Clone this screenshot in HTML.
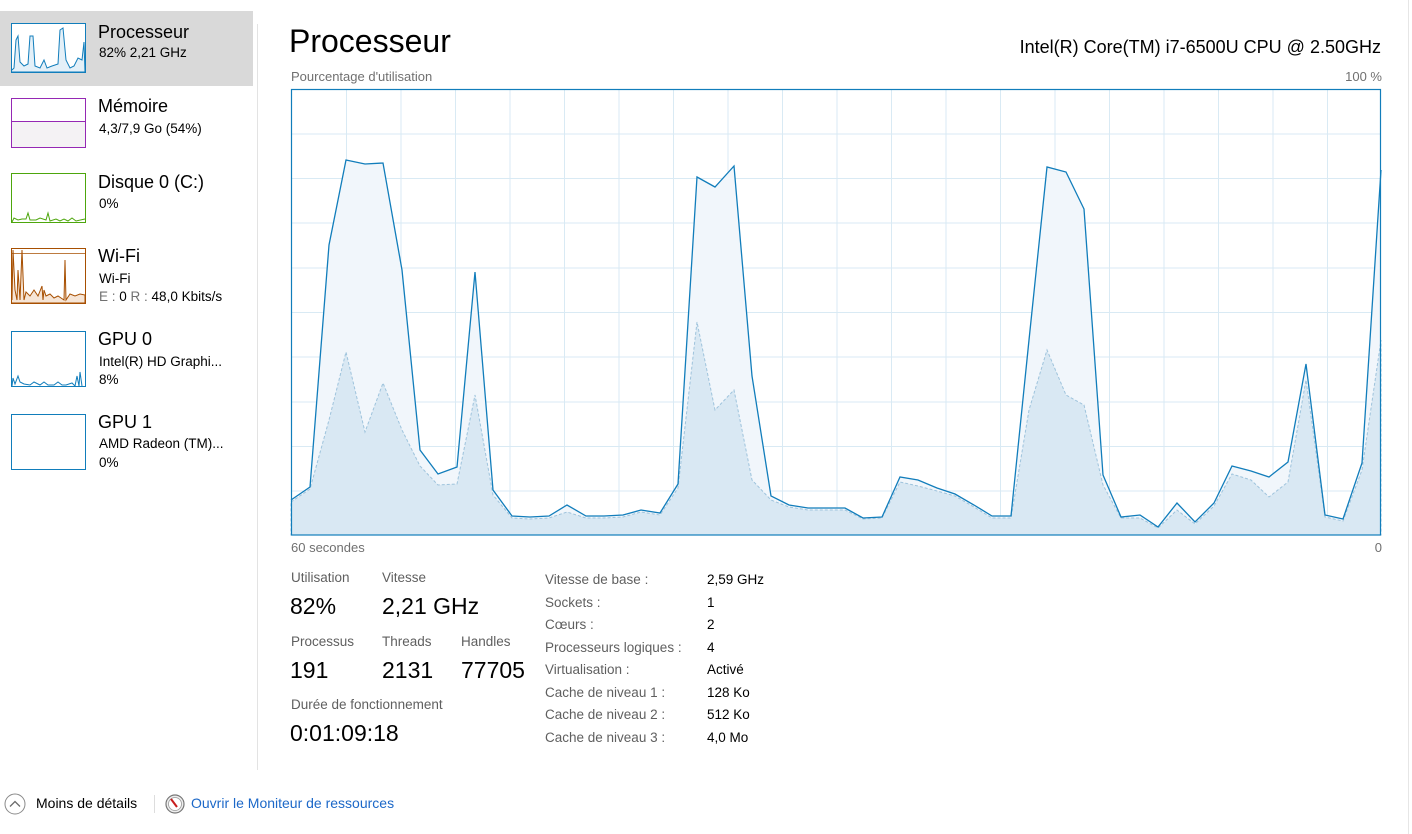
<!DOCTYPE html>
<html><head><meta charset="utf-8"><style>
*{margin:0;padding:0;box-sizing:border-box}
body{width:1412px;height:834px;background:#fff;font-family:"Liberation Sans",sans-serif;color:#000;position:relative;overflow:hidden}
.a{position:absolute;white-space:nowrap}
.g{color:#707070}
.t1{font-size:18px}
.t2{font-size:13.5px}
.lab{font-size:13.5px;color:#5f5f5f}
.big{font-size:23px}
</style></head><body>
<div class="a" style="left:0;top:11px;width:253px;height:75px;background:#d9d9d9"></div>
<div class="a" style="left:257px;top:24px;width:1px;height:746px;background:#e3e3e3"></div>
<div class="a" style="left:1408px;top:0;width:1px;height:834px;background:#e6e6e6"></div>

<svg class="a" style="left:0;top:0" width="100" height="480">
<rect x="11.5" y="23.5" width="74" height="49" fill="#fff" stroke="#117dbb"/>
<polyline points="12,70 14,68 16,40 18,36 20,62 24,66 28,64 30,36 33,36 35,66 40,68 44,60 47,68 52,66 58,64 60,30 63,28 66,60 70,68 74,66 78,58 82,60 84,42 85,72 12,72" fill="#e4f0f8" stroke="#117dbb" stroke-width="1"/>
<rect x="11.5" y="98.5" width="74" height="49" fill="#fff" stroke="#9528b4"/>
<rect x="12" y="121" width="73" height="26" fill="#f4f2f4"/>
<line x1="12" y1="121.5" x2="85" y2="121.5" stroke="#9528b4"/>
<rect x="11.5" y="173.5" width="74" height="49" fill="#fff" stroke="#4da60c"/>
<polyline points="12,222 14,218 18,220 22,219 26,219 28,213 30,220 36,220 40,218 46,220 48,213 50,221 56,219 60,221 64,219 68,221 72,218 76,221 85,219" fill="none" stroke="#4da60c"/>
<rect x="11.5" y="248.5" width="74" height="55" fill="#fff" stroke="#a74f01"/>
<line x1="12" y1="253.5" x2="85" y2="253.5" stroke="#a74f01" stroke-width=".8"/>
<polyline points="12,300 13,250 15,290 17,300 18,270 20,300 22,250 24,300 26,292 30,296 34,290 38,296 42,286 43,300 44,290 46,296 50,294 54,298 58,296 64,300 65,260 66,300 70,294 75,296 80,294 85,295 85,303 12,303" fill="#f6e5d6" stroke="#a74f01"/>
<rect x="11.5" y="331.5" width="74" height="55" fill="#fff" stroke="#117dbb"/>
<polyline points="12,386 13,378 15,384 18,376 20,382 24,384 30,385 34,382 40,385 44,382 48,385 54,385 58,382 62,385 66,385 72,383 75,386 77,376 79,386 80,372 82,386" fill="none" stroke="#117dbb"/>
<rect x="11.5" y="414.5" width="74" height="55" fill="#fff" stroke="#117dbb"/>
</svg>

<div class="a t1" style="left:98px;top:22px">Processeur</div>
<div class="a t2" style="left:99px;top:45px">82% 2,21 GHz</div>
<div class="a t1" style="left:98px;top:96px">Mémoire</div>
<div class="a t2" style="left:99px;top:121px">4,3/7,9 Go (54%)</div>
<div class="a t1" style="left:98px;top:172px">Disque 0 (C:)</div>
<div class="a t2" style="left:99px;top:196px">0%</div>
<div class="a t1" style="left:98px;top:246px">Wi-Fi</div>
<div class="a t2" style="left:99px;top:271px">Wi-Fi</div>
<div class="a t2" style="left:99px;top:289px"><span class="g">E :</span> 0 <span class="g">R :</span> 48,0 Kbits/s</div>
<div class="a t1" style="left:98px;top:329px">GPU 0</div>
<div class="a t2" style="left:99px;top:354px">Intel(R) HD Graphi...</div>
<div class="a t2" style="left:99px;top:372px">8%</div>
<div class="a t1" style="left:98px;top:412px">GPU 1</div>
<div class="a t2" style="left:99px;top:436px">AMD Radeon (TM)...</div>
<div class="a t2" style="left:99px;top:455px">0%</div>

<div class="a" style="left:289px;top:23px;font-size:32px">Processeur</div>
<div class="a" style="right:31px;top:37px;font-size:18px">Intel(R) Core(TM) i7-6500U CPU @ 2.50GHz</div>
<div class="a" style="left:291px;top:69px;font-size:13px;color:#707070">Pourcentage d'utilisation</div>
<div class="a" style="right:30px;top:69px;font-size:13px;color:#707070">100 %</div>
<div class="a" style="left:291px;top:540px;font-size:13px;color:#707070">60 secondes</div>
<div class="a" style="right:30px;top:540px;font-size:13px;color:#707070">0</div>

<svg class="a" style="left:0;top:0" width="1412" height="560">
<g stroke="#d9eaf4" stroke-width="1">
<path d="M346.5 89V535M401 89V535M455.5 89V535M510 89V535M564.5 89V535M619 89V535M673.5 89V535M728 89V535M782.5 89V535M837 89V535M891.5 89V535M946 89V535M1000.5 89V535M1055 89V535M1109.5 89V535M1164 89V535M1218.5 89V535M1273 89V535M1327.5 89V535"/>
<path d="M291 134H1381M291 178.5H1381M291 223H1381M291 268H1381M291 312.5H1381M291 357H1381M291 402H1381M291 446.5H1381M291 491H1381"/>
</g>
<polygon fill="#f1f6fb" points="291,500 310,487 329,245 346,160 365,164 383,163 402,270 420,450 438,474 457,467 475,272 493,490 512,516 530,517 549,516 567,505 586,516 604,516 623,515 641,510 660,513 678,484 697,177 715,187 734,166 752,376 771,496 789,505 808,508 826,508 845,508 863,518 882,517 900,477 918,480 937,488 955,494 974,505 992,516 1011,516 1029,340 1047,167 1066,172 1084,209 1103,475 1121,517 1140,515 1158,527 1177,503 1195,522 1214,503 1232,466 1251,471 1269,477 1288,462 1306,364 1325,515 1343,519 1362,463 1381,170 1381,535 291,535"/>
<polygon fill="#d9e8f3" stroke="#9ec3dc" stroke-width="1" stroke-dasharray="3,2" points="291,502 310,489 329,420 346,352 365,432 383,383 402,430 420,466 438,485 457,484 475,395 493,495 512,518 530,519 549,518 567,512 586,518 604,518 623,517 641,512 660,515 678,488 697,322 715,410 734,390 752,480 771,500 789,507 808,510 826,510 845,510 863,519 882,518 900,482 918,486 937,491 955,496 974,507 992,518 1011,518 1029,410 1047,350 1066,395 1084,405 1103,485 1121,518 1140,518 1158,528 1177,510 1195,524 1214,506 1232,474 1251,480 1269,497 1288,482 1306,380 1325,517 1343,521 1362,470 1381,340 1381,535 291,535"/>
<polyline fill="none" stroke="#117dbb" stroke-width="1.3" points="291,500 310,487 329,245 346,160 365,164 383,163 402,270 420,450 438,474 457,467 475,272 493,490 512,516 530,517 549,516 567,505 586,516 604,516 623,515 641,510 660,513 678,484 697,177 715,187 734,166 752,376 771,496 789,505 808,508 826,508 845,508 863,518 882,517 900,477 918,480 937,488 955,494 974,505 992,516 1011,516 1029,340 1047,167 1066,172 1084,209 1103,475 1121,517 1140,515 1158,527 1177,503 1195,522 1214,503 1232,466 1251,471 1269,477 1288,462 1306,364 1325,515 1343,519 1362,463 1381,170"/>
<rect x="291.5" y="89.5" width="1089" height="445.5" fill="none" stroke="#117dbb" stroke-width="1.2"/>
</svg>

<div class="a lab" style="left:291px;top:570px">Utilisation</div>
<div class="a lab" style="left:382px;top:570px">Vitesse</div>
<div class="a big" style="left:290px;top:593px">82%</div>
<div class="a big" style="left:382px;top:593px">2,21 GHz</div>
<div class="a lab" style="left:291px;top:634px">Processus</div>
<div class="a lab" style="left:382px;top:634px">Threads</div>
<div class="a lab" style="left:461px;top:634px">Handles</div>
<div class="a big" style="left:290px;top:657px">191</div>
<div class="a big" style="left:382px;top:657px">2131</div>
<div class="a big" style="left:461px;top:657px">77705</div>
<div class="a lab" style="left:291px;top:697px">Durée de fonctionnement</div>
<div class="a big" style="left:290px;top:720px">0:01:09:18</div>

<div class="a lab" style="left:545px;top:569px;line-height:22.5px">Vitesse de base :<br>Sockets :<br>Cœurs :<br>Processeurs logiques :<br>Virtualisation :<br>Cache de niveau 1 :<br>Cache de niveau 2 :<br>Cache de niveau 3 :</div>
<div class="a" style="left:707px;top:569px;font-size:13.5px;line-height:22.5px">2,59 GHz<br>1<br>2<br>4<br>Activé<br>128 Ko<br>512 Ko<br>4,0 Mo</div>

<svg class="a" style="left:3px;top:792px" width="24" height="24"><circle cx="12" cy="12" r="10" fill="#fff" stroke="#8a8a8a"/><path d="M7 14.5L12 9.5L17 14.5" fill="none" stroke="#6a6a6a" stroke-width="1.3"/></svg>
<div class="a" style="left:36px;top:795px;font-size:14px">Moins de détails</div>
<div class="a" style="left:154px;top:795px;width:1px;height:18px;background:#ddd"></div>
<svg class="a" style="left:164px;top:793px" width="22" height="22"><circle cx="11" cy="11" r="9" fill="#eee" stroke="#777" stroke-width="1.2"/><circle cx="11" cy="11" r="6.5" fill="#fff" stroke="#999" stroke-width=".8"/><path d="M7 6L13 14" stroke="#c81e1e" stroke-width="2"/></svg>
<div class="a" style="left:191px;top:795px;font-size:14px;color:#1c68c8">Ouvrir le Moniteur de ressources</div>
</body></html>
